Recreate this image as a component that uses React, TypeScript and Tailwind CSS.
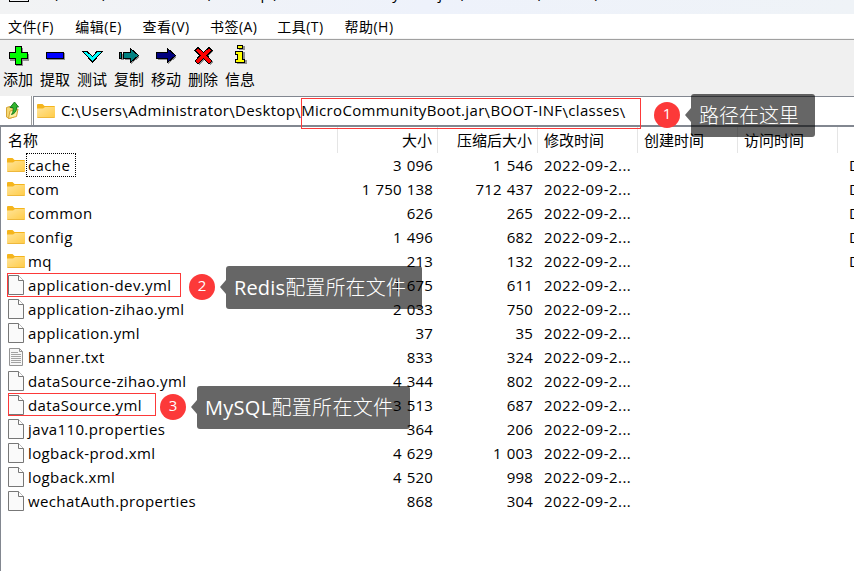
import React from 'react';

const LATIN = 'font-["Open_Sans","Noto_Sans_CJK_SC",sans-serif]';

type Kind = 'folder' | 'file' | 'text';
type Row = { name: string; kind: Kind; size: string; packed: string };

const rows: Row[] = [
  { name: 'cache', kind: 'folder', size: '3 096', packed: '1 546' },
  { name: 'com', kind: 'folder', size: '1 750 138', packed: '712 437' },
  { name: 'common', kind: 'folder', size: '626', packed: '265' },
  { name: 'config', kind: 'folder', size: '1 496', packed: '682' },
  { name: 'mq', kind: 'folder', size: '213', packed: '132' },
  { name: 'application-dev.yml', kind: 'file', size: '1 675', packed: '611' },
  { name: 'application-zihao.yml', kind: 'file', size: '2 033', packed: '750' },
  { name: 'application.yml', kind: 'file', size: '37', packed: '35' },
  { name: 'banner.txt', kind: 'text', size: '833', packed: '324' },
  { name: 'dataSource-zihao.yml', kind: 'file', size: '4 344', packed: '802' },
  { name: 'dataSource.yml', kind: 'file', size: '3 513', packed: '687' },
  { name: 'java110.properties', kind: 'file', size: '364', packed: '206' },
  { name: 'logback-prod.xml', kind: 'file', size: '4 629', packed: '1 003' },
  { name: 'logback.xml', kind: 'file', size: '4 520', packed: '998' },
  { name: 'wechatAuth.properties', kind: 'file', size: '868', packed: '304' },
];

const menus = ['文件(F)', '编辑(E)', '查看(V)', '书签(A)', '工具(T)', '帮助(H)'];

const segments = ['C:', 'Users', 'Administrator', 'Desktop', 'MicroCommunityBoot.jar', 'BOOT-INF', 'classes'];

function Path() {
  return (
    <>
      {segments.map((s) => (
        <React.Fragment key={s}>
          {s}
          <span className="align-[-2px] leading-none">\</span>
        </React.Fragment>
      ))}
    </>
  );
}

function Folder() {
  return (
    <svg width="18" height="16" viewBox="0 0 18 16" className="block shrink-0">
      <defs>
        <linearGradient id="folderFill" x1="0" y1="0" x2="1" y2="1">
          <stop offset="0" stopColor="#ffe49a" />
          <stop offset="1" stopColor="#ffcb45" />
        </linearGradient>
      </defs>
      <path d="M0 2Q0 1 1 1H5.5L7.5 3H17Q18 3 18 4V7H0Z" fill="#f5b51c" />
      <path d="M0 5.5H6L8 4H18V14Q18 15 17 15H1Q0 15 0 14Z" fill="url(#folderFill)" />
      <path d="M.5 14.5H17.5" stroke="#eeb83c" />
    </svg>
  );
}

function Page({ lined }: { lined?: boolean }) {
  if (lined) {
    return (
      <svg width="18" height="20" viewBox="0 0 18 20" className="block shrink-0">
        <path d="M2.5 1.5H12.5L15.5 4.5V18.5H2.5Z" fill="#f7f7f7" stroke="#949494" />
        <path d="M12.5 1.5V4.5H15.5" fill="none" stroke="#949494" />
        <path d="M4 5.5H11M4 7.5H14M4 9.5H14M4 11.5H14M4 13.5H14M4 15.5H14" stroke="#a3a3a3" />
      </svg>
    );
  }
  return (
    <svg width="18" height="20" viewBox="0 0 18 20" className="block shrink-0">
      <path d="M1.5 .5H11.5L16.5 5.5V19.5H1.5Z" fill="#fafafa" stroke="#777" />
      <path d="M11.5 .5V5.5H16.5" fill="#fff" stroke="#777" />
    </svg>
  );
}

const tools: { label: string; icon: React.ReactNode }[] = [
  {
    label: '添加',
    icon: (
      <>
        <path d="M8 2H15V8H21V15H15V20H8V15H2V8H8Z" transform="translate(1 1)" fill="#909090" />
        <path d="M8.5 1.5H14.5V7.5H20.5V13.5H14.5V19.5H8.5V13.5H2.5V7.5H8.5Z" fill="#0f0" stroke="#000" />
      </>
    ),
  },
  {
    label: '提取',
    icon: (
      <>
        <path d="M3 8H21V15H3Z" fill="#909090" />
        <path d="M2.5 7.5H19.5V13.5H2.5Z" fill="#00f" stroke="#000" />
      </>
    ),
  },
  {
    label: '测试',
    icon: <path d="M1.5 6.5H6L11.5 11.5L16 6.5H21.5L11.5 17Z" fill="#0ff" stroke="#000" />,
  },
  {
    label: '复制',
    icon: (
      <>
        <path d="M2 8H5V14H2ZM6 8H9V14H6ZM9 8H12V4L21 11L12 18V14H9Z" transform="translate(1 1)" fill="#909090" />
        <path d="M1.5 7.5H3.5V13.5H1.5ZM5.5 7.5H12.5V3.5L20.5 10.5L12.5 17.5V13.5H5.5Z" fill="#008080" stroke="#000" />
      </>
    ),
  },
  {
    label: '移动',
    icon: (
      <>
        <path d="M2 7H12V3L21 11L12 18V14H2Z" transform="translate(1 1)" fill="#909090" />
        <path d="M1.5 7.5H12.5V3.5L20.5 10.5L12.5 17.5V13.5H1.5Z" fill="#000080" stroke="#000" />
      </>
    ),
  },
  {
    label: '删除',
    icon: (
      <>
        <path d="M6 3L12 8L17 3L20 6L15 11L20 17L17 20L12 14L6 20L3 17L8 11L3 6Z" transform="translate(1 0)" fill="#909090" />
        <path d="M6 2.5L11.5 7.5L17 2.5L20 5.5L15 10.5L20 16L17 19L11.5 13.5L6 19L3 16L8 10.5L3 5.5Z" fill="#f00" stroke="#000" />
      </>
    ),
  },
  {
    label: '信息',
    icon: (
      <>
        <path d="M9 1H15V5H9ZM7 7H15V15H17V19H7V15H9V10H7Z" transform="translate(1 0)" fill="#909090" />
        <path d="M8.5 .5H13.5V3.5H8.5ZM6.5 6.5H13.5V14.5H15.5V17.5H6.5V14.5H8.5V9.5H6.5Z" fill="#ff0" stroke="#000" />
      </>
    ),
  },
];

function UpIcon() {
  return (
    <svg width="18" height="19" viewBox="0 0 18 19" className="block">
      <path d="M2.5 6.5L6 5.5L7 7H10V16L5 17.5L2.5 16Z" fill="#f4d873" stroke="#d6a435" />
      <path d="M6 10L14 8L12.5 15.5L4.5 17.5Z" fill="#fff0a0" stroke="#d6a435" />
      <path d="M10.5 1L14.5 6H12.5C12.8 10 11 12.5 7.5 13.5C9.5 11 9.3 9 9 6.5H6Z" fill="#33b52d" stroke="#187c20" />
    </svg>
  );
}

function Marker({ n, place }: { n: number; place: string }) {
  return (
    <div className={`absolute flex size-[26px] items-center justify-center rounded-full bg-[#fc3939] text-[15px] leading-none text-white ${place}`}>
      <span className="-mt-[3px]">{n}</span>
    </div>
  );
}

function Callout({ latin, text, place }: { latin?: string; text: string; place: string }) {
  return (
    <div className={`absolute flex h-[43px] items-center rounded-[3px] bg-black/60 pt-px pl-[8px] text-[20px] whitespace-nowrap text-white ${place}`}>
      <svg width="6" height="14" viewBox="0 0 6 14" className="absolute top-[14px] -left-[6px]">
        <path d="M6 0V14L0 7Z" fill="#000" fillOpacity=".6" />
      </svg>
      <span>
        {latin}
        <span className="font-light">{text}</span>
      </span>
    </div>
  );
}

export default function App() {
  return (
    <div className={`relative flex h-[571px] w-[854px] flex-col overflow-hidden bg-white text-[15px] text-black ${LATIN}`}>
      <div className="flex h-[14px] shrink-0 items-end overflow-hidden bg-linear-to-r from-[#f2f3f4] via-[#eef2fb] to-[#eff3f7]">
        <div className="ml-[9px] h-[14px] w-[20px]">
          <div className="h-[2px] w-full border-x border-b border-black" />
        </div>
        <div className="mb-[11px] ml-[9px] text-[15px] leading-[20px] tracking-[.25px] whitespace-nowrap">
          <Path />
        </div>
      </div>
      <div className="flex h-[25px] shrink-0 items-center border-b border-[#f4f4f4] pl-[8px] text-[14px] tracking-[.5px]">
        {menus.map((m) => (
          <span key={m} className="w-[67.3px] whitespace-nowrap">{m}</span>
        ))}
      </div>
      <div className="flex h-[57px] shrink-0 border-t border-[#a0a0a0] bg-[#f0f0f0]">
        {tools.map((t) => (
          <div key={t.label} className="flex w-[37px] flex-col items-center pt-[5px]">
            <svg width="24" height="22" viewBox="0 0 24 22" className="block" shapeRendering="crispEdges">{t.icon}</svg>
            <span className="mt-[2px] mr-px text-[15px] leading-[20px] whitespace-nowrap">{t.label}</span>
          </div>
        ))}
      </div>
      <div className="flex h-[29px] shrink-0">
        <div className="flex w-[32px] items-center border-r border-[#a0a0a0] pl-[4px]">
          <UpIcon />
        </div>
        <div className="ml-px flex flex-1 items-center border-t border-l border-[#828790] pl-[3px]">
          <Folder />
          <span className="-mt-[2px] ml-[6px] text-[15px] leading-[20px] tracking-[.33px] whitespace-nowrap">
            <Path />
          </span>
        </div>
      </div>
      <div className="flex min-h-0 flex-1 flex-col border-t-2 border-l border-[#828790]">
        <div className="flex h-[26px] shrink-0 items-center leading-[26px]">
          <div className="w-[337px] shrink-0 border-r border-[#e5e5e5] pl-[7px]">名称</div>
          <div className="w-[100px] shrink-0 border-r border-[#e5e5e5] pr-[5px] text-right">大小</div>
          <div className="w-[100px] shrink-0 border-r border-[#e5e5e5] pr-[5px] text-right">压缩后大小</div>
          <div className="w-[100px] shrink-0 border-r border-[#e5e5e5] pl-[6px]">修改时间</div>
          <div className="w-[100px] shrink-0 border-r border-[#e5e5e5] pl-[6px]">创建时间</div>
          <div className="w-[100px] shrink-0 border-r border-[#e5e5e5] pl-[6px]">访问时间</div>
        </div>
        {rows.map((r, i) => (
          <div key={r.name} className="flex h-[24px] shrink-0 items-center whitespace-nowrap">
            <div className="flex w-[337px] shrink-0 items-center pl-[6px]">
              {r.kind === 'folder' ? <Folder /> : <Page lined={r.kind === 'text'} />}
              <span className={`ml-px flex h-[24px] items-center border border-dotted pr-[5px] pl-px tracking-[.38px] ${i === 0 ? 'border-black' : 'border-transparent'}`}>
                {r.name}
              </span>
            </div>
            <div className="w-[100px] shrink-0 pr-[5px] text-right tracking-[.2px] [word-spacing:.8px]">{r.size}</div>
            <div className="w-[100px] shrink-0 pr-[5px] text-right tracking-[.2px] [word-spacing:.8px]">{r.packed}</div>
            <div className="w-[311px] shrink-0 pl-[6px] tracking-[.48px]">2022-09-2...</div>
            {r.kind === 'folder' && <div className="shrink-0">D</div>}
          </div>
        ))}
      </div>
      <div className="absolute top-[98px] left-[301px] h-[31px] w-[340px] border border-[#fc3939]" />
      <div className="absolute top-[273px] left-[7px] h-[24px] w-[174px] border border-[#fc3939]" />
      <div className="absolute top-[393px] left-[8px] h-[23px] w-[148px] border border-[#fc3939]" />
      <Marker n={1} place="left-[654px] top-[102px]" />
      <Marker n={2} place="left-[189px] top-[274px]" />
      <Marker n={3} place="left-[160px] top-[394px]" />
      <Callout place="left-[691px] top-[94px] w-[124px]" text="路径在这里" />
      <Callout place="left-[226px] top-[266px] w-[196px] tracking-[.15px]" latin="Redis" text="配置所在文件" />
      <Callout place="left-[197px] top-[386px] w-[213px] tracking-[.3px]" latin="MySQL" text="配置所在文件" />
    </div>
  );
}
